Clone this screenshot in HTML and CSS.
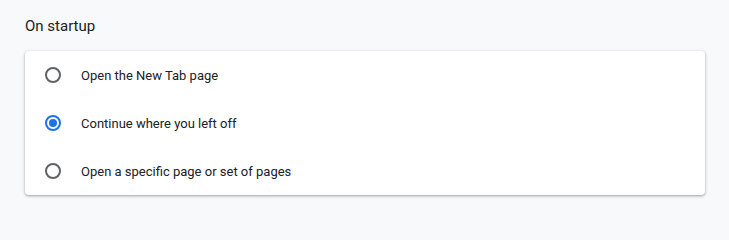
FILE: index.html
```html
<!DOCTYPE html>
<html lang="en">
<head>
<meta charset="utf-8">
<title>On startup</title>
<link rel="stylesheet" href="styles.css">
</head>
<body>
<main class="page">
  <h2 class="section-title">On startup</h2>
  <div class="card" role="radiogroup">
    <label class="row">
      <span class="radio"></span>
      <span class="label">Open the New Tab page</span>
    </label>
    <label class="row">
      <span class="radio checked"></span>
      <span class="label">Continue where you left off</span>
    </label>
    <label class="row">
      <span class="radio"></span>
      <span class="label">Open a specific page or set of pages</span>
    </label>
  </div>
</main>
</body>
</html>
```
FILE: styles.css
```css
html, body {
  margin: 0;
  padding: 0;
  background: #f8f9fa;
}
body {
  font-family: Roboto, "Liberation Sans", sans-serif;
  color: #202124;
  width: 729px;
  height: 207px;
  overflow: hidden;
}
.page {
  padding: 14px 24px 0 25px;
}
.section-title {
  margin: 0;
  font-size: 15px;
  font-weight: 400;
  line-height: 24px;
  height: 24px;
  padding-bottom: 13px;
  padding-left: 0;
  color: #202124;
}
.card {
  background: #fff;
  border-radius: 4px;
  box-shadow: 0 1px 2px 0 rgba(60, 64, 67, 0.3), 0 1px 3px 1px rgba(60, 64, 67, 0.15);
  display: flex;
  flex-direction: column;
}
.row {
  display: flex;
  align-items: center;
  height: 48px;
  padding: 0 20px;
  gap: 20px;
  font-size: 13px;
}
.radio {
  box-sizing: border-box;
  width: 16px;
  height: 16px;
  border: 2px solid #5f6368;
  border-radius: 50%;
  display: flex;
  align-items: center;
  justify-content: center;
  flex: none;
}
.radio.checked {
  border-color: #1a73e8;
}
.radio.checked::after {
  content: "";
  width: 8px;
  height: 8px;
  border-radius: 50%;
  background: #1a73e8;
}
.label {
  color: #202124;
}
```
